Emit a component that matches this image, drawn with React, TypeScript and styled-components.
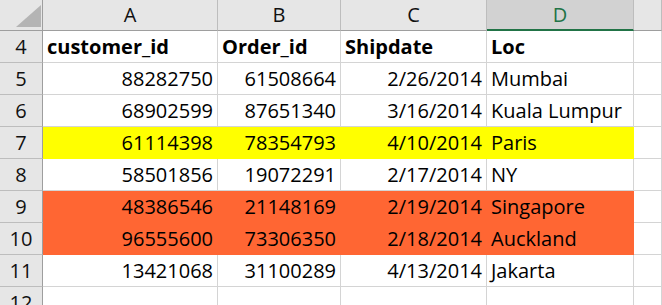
import React from "react";
import styled, { createGlobalStyle } from "styled-components";

const Global = createGlobalStyle`
  html, body { margin: 0; padding: 0; background: #ffffff; overflow: hidden; }
  body { font-family: "Open Sans", "Liberation Sans", sans-serif; }
`;

const COLS = "43px 175px 123px 146px 147px 1fr";

const Sheet = styled.div`
  width: 662px;
  height: 305px;
  overflow: hidden;
  display: grid;
  grid-template-columns: ${COLS};
  grid-template-rows: 31px repeat(8, 32px) 32px;
  color: #000;
`;

const Corner = styled.div`
  position: relative;
  background: #e6e6e6;
  border-right: 1px solid #9e9e9e;
  border-bottom: 1px solid #9e9e9e;
  box-sizing: border-box;
`;

const Triangle = styled.svg`
  position: absolute;
  left: 16px;
  top: 5px;
`;

const ColHead = styled.div<{ $active?: boolean }>`
  box-sizing: border-box;
  display: flex;
  align-items: flex-end;
  justify-content: center;
  padding-bottom: ${(p) => (p.$active ? "2px" : "3px")};
  font-size: 20px;
  line-height: 24px;
  background: ${(p) => (p.$active ? "#d2d2d2" : "#e6e6e6")};
  color: ${(p) => (p.$active ? "#217346" : "#111")};
  font-weight: 400;
  border-right: 1px solid #bdbdbd;
  border-bottom: ${(p) => (p.$active ? "2px solid #217346" : "1px solid #9e9e9e")};
`;

const RowHead = styled.div`
  box-sizing: border-box;
  display: flex;
  align-items: flex-end;
  justify-content: center;
  padding-bottom: 3px;
  font-size: 20px;
  line-height: 24px;
  background: #e6e6e6;
  color: #111;
  border-right: 1px solid #9e9e9e;
  border-bottom: 1px solid #bdbdbd;
`;

const Cell = styled.div<{ $fill?: string; $right?: boolean; $bold?: boolean }>`
  box-sizing: border-box;
  display: flex;
  align-items: flex-end;
  justify-content: ${(p) => (p.$right ? "flex-end" : "flex-start")};
  padding: 0 4px 3px 4px;
  font-size: 20px;
  line-height: 24px;
  font-weight: ${(p) => (p.$bold ? 700 : 400)};
  white-space: nowrap;
  overflow: visible;
  background: ${(p) => p.$fill ?? "#ffffff"};
  border-right: 1px solid ${(p) => p.$fill ?? "#d4d4d4"};
  border-bottom: 1px solid ${(p) => p.$fill ?? "#d4d4d4"};
`;

const EmptyCell = styled.div`
  box-sizing: border-box;
  background: #ffffff;
  border-right: 1px solid #d4d4d4;
  border-bottom: 1px solid #d4d4d4;
`;

type Row = { n: number; fill?: string; data: [string, string, string, string] };

const YELLOW = "#ffff00";
const ORANGE = "#ff6633";

const rows: Row[] = [
  { n: 5, data: ["88282750", "61508664", "2/26/2014", "Mumbai"] },
  { n: 6, data: ["68902599", "87651340", "3/16/2014", "Kuala Lumpur"] },
  { n: 7, fill: YELLOW, data: ["61114398", "78354793", "4/10/2014", "Paris"] },
  { n: 8, data: ["58501856", "19072291", "2/17/2014", "NY"] },
  { n: 9, fill: ORANGE, data: ["48386546", "21148169", "2/19/2014", "Singapore"] },
  { n: 10, fill: ORANGE, data: ["96555600", "73306350", "2/18/2014", "Auckland"] },
  { n: 11, data: ["13421068", "31100289", "4/13/2014", "Jakarta"] },
];

export default function App() {
  return (
    <>
      <Global />
      <Sheet>
        <Corner>
          <Triangle width="26" height="23" viewBox="0 0 26 23">
            <polygon points="0,22 25,22 25,0" fill="#b4b4b4" />
          </Triangle>
        </Corner>
        <ColHead>A</ColHead>
        <ColHead>B</ColHead>
        <ColHead>C</ColHead>
        <ColHead $active>D</ColHead>
        <ColHead />

        <RowHead>4</RowHead>
        <Cell $bold>customer_id</Cell>
        <Cell $bold>Order_id</Cell>
        <Cell $bold>Shipdate</Cell>
        <Cell $bold>Loc</Cell>
        <EmptyCell />

        {rows.map((r) => (
          <React.Fragment key={r.n}>
            <RowHead>{r.n}</RowHead>
            <Cell $fill={r.fill} $right>{r.data[0]}</Cell>
            <Cell $fill={r.fill} $right>{r.data[1]}</Cell>
            <Cell $fill={r.fill} $right>{r.data[2]}</Cell>
            <Cell $fill={r.fill}>{r.data[3]}</Cell>
            <EmptyCell />
          </React.Fragment>
        ))}

        <RowHead>12</RowHead>
        <EmptyCell />
        <EmptyCell />
        <EmptyCell />
        <EmptyCell />
        <EmptyCell />
      </Sheet>
    </>
  );
}
